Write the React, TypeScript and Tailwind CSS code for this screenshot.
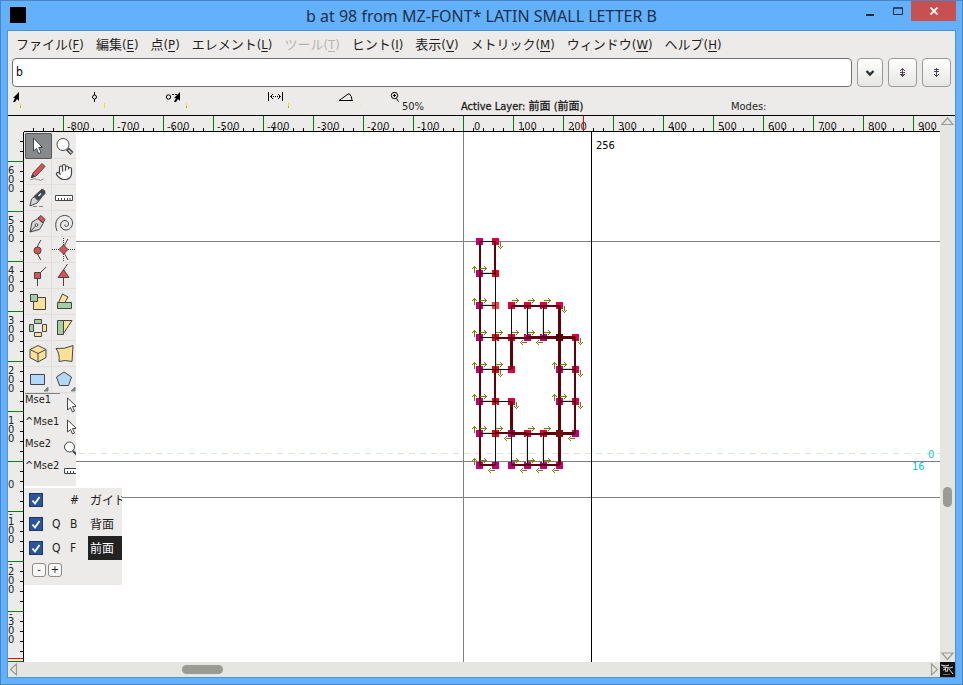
import React from "react";
import { Hand } from "lucide-react";

const UI = "font-['DejaVu_Sans_Condensed','DejaVu_Sans','Noto_Sans_CJK_JP',sans-serif]";
const INK = "#41464a";
const RED = "#e05050";
const GREEN = "#a4cda0";
const YELLOW = "#ffe09a";
const BLUE = "#b4d8f8";

const MENUS: [string, string, boolean?][] = [
  ["ファイル", "F"],
  ["編集", "E"],
  ["点", "P"],
  ["エレメント", "L"],
  ["ツール", "T", true],
  ["ヒント", "I"],
  ["表示", "V"],
  ["メトリック", "M"],
  ["ウィンドウ", "W"],
  ["ヘルプ", "H"],
];

function TitleBar() {
  return (
    <header className="grid h-[29px] shrink-0 grid-cols-[1fr_auto_1fr]">
      <div className="ml-[3px] mt-[6px] size-4 bg-black" />
      <h1 className="pt-[3px] font-['Noto_Sans',sans-serif] text-[16px] leading-[24px] text-[#1c3047]">
        b at 98 from MZ-FONT* LATIN SMALL LETTER B
      </h1>
      <div className="flex items-start justify-end">
        <button aria-label="Minimize" className="flex h-[22px] w-[27px] items-center justify-center">
          <svg width="9" height="9"><path d="M0 6h8v2H0z" fill="#1c2a38" /></svg>
        </button>
        <button aria-label="Maximize" className="flex h-5 w-[27px] items-center justify-center">
          <svg width="10" height="8"><path d="M.5 1h9v6.500h-9zM0 1h10" fill="none" stroke="#1c2a38" /></svg>
        </button>
        <button aria-label="Close" className="flex h-5 w-[45px] items-center justify-center bg-[#c75050]">
          <svg width="8" height="8"><path d="M.5 .5l7 7M7.500 .5l-7 7" stroke="#fff" strokeWidth="1.800" /></svg>
        </button>
      </div>
    </header>
  );
}

function MenuBar() {
  return (
    <nav className="flex h-[27px] shrink-0 items-center gap-3 pl-2">
      {MENUS.map(([name, key, off]) => (
        <button key={key} disabled={off} className={"flex items-baseline whitespace-nowrap leading-[20px] " + (off ? "text-[#b4b4b2]" : "text-[#1e1e1e]")}>
          <span className="font-['Noto_Sans_CJK_JP',sans-serif] text-[13px]">{name}</span>
          <span className="text-[13px]">(<u className="underline-offset-2">{key}</u>)</span>
        </button>
      ))}
    </nav>
  );
}

const RAISED = "flex h-[29px] items-center justify-center rounded-[4px] border border-[#9a9a98] bg-linear-to-b from-white to-[#e6e6e4]";

function WordRow() {
  return (
    <div className="flex shrink-0 items-center gap-[5px] px-1">
      <input aria-label="Characters" defaultValue="b" className="h-[29px] min-w-0 flex-1 rounded-[4px] border border-[#71716f] bg-white px-[3px] pb-px text-[12px] text-black" />
      <button aria-label="History" className={RAISED + " w-[26px]"}>
        <svg width="10" height="8"><path d="M1.500 2l3.500 3.500L8.500 2" fill="none" stroke="#2b3236" strokeWidth="2.400" /></svg>
      </button>
      <button aria-label="Previous" className={RAISED + " w-[29px]"}>
        <svg width="7" height="9" shapeRendering="crispEdges"><path d="M3 0h1v9h-1zM2 1h3v1h-3zM1 2h1v1h-1zM5 2h1v1h-1zM1 4h5v1h-5zM1 6h5v1h-5zM2 7h3v1h-3z" fill="#5b4660" /></svg>
      </button>
      <button aria-label="Next" className={RAISED + " w-[29px]"}>
        <svg width="7" height="9" shapeRendering="crispEdges"><path d="M3 0h1v9h-1zM1 1h5v1h-5zM1 3h5v1h-5zM1 6h1v1h-1zM5 6h1v1h-1zM2 7h3v1h-3z" fill="#46466a" /></svg>
      </button>
    </div>
  );
}

function InfoRow() {
  return (
    <div className="flex h-[29px] shrink-0 items-start border-b border-black pl-1 text-[11px] leading-[14px] text-[#1e1e1e]">
      <svg width="390" height="22" className="shrink-0" fill="none" stroke="#000">
        <path d="M7 5v9l-2-2-2 3H1l2-4H1z" fill="#000" stroke="none" />
        <path d="M82.500 5v3M82.500 12v3" /><circle cx="82.500" cy="10" r="2" />
        <circle cx="156.500" cy="10" r="2.200" /><path d="M160 7.500h5" strokeDasharray="2 1" />
        <path d="M168 5v9l-2-2-2 3h-2l2-4h-2z" fill="#000" stroke="none" />
        <path d="M256.500 5v9M270.500 5v9" /><path d="M259 9.500h10" strokeDasharray="1 1" /><path d="M261 7l-2.500 2.500L261 12M266 7l2.500 2.500L266 12" />
        <path d="M327 13.500h14M327 13.500l10-7M337 6.500q3 2.500 3 6.500" />
        <circle cx="382.500" cy="8.500" r="3.200" /><path d="M381 8.500h3M382.500 7v3M384.500 11.500l2 3" />
        <path d="M8.500 16v5M92.500 16v5M174.500 16v5M276.500 16v5" stroke="#f0e800" />
        <path d="M8.500 19v2M174.500 19v2M276.500 19v2" stroke="#d8a000" />
        <path d="M348.500 16v5" stroke="#f2eea0" />
      </svg>
      <span className="w-[59px] shrink-0 pt-[13px]">50%</span>
      <span className="w-[270px] shrink-0 pt-[13px]">
        <span className="[-webkit-text-stroke:0.3px]">Active Layer: 前面 (前面)</span>
      </span>
      <span className="pt-[13px]">Modes:</span>
    </div>
  );
}

function range(from: number, to: number, step: number) {
  const out: number[] = [];
  for (let v = from; v <= to; v += step) out.push(v);
  return out;
}

const ORIGIN_X = 439;
const ORIGIN_Y = 329;

function TopRuler() {
  return (
    <svg className="col-start-2 h-4 w-full text-[11px]" fill="#222">
      {range(-430, 1500, 10).map((v) => (v % 50 === 0 ? null : <path key={v} d={`M${ORIGIN_X + v + 0.5} 12v3`} stroke="#000" />))}
      {range(-400, 1500, 50).map((v) => <path key={v} d={`M${ORIGIN_X + v + 0.5} 0v15`} stroke="#008000" />)}
      {range(-400, 450, 50).map((v) => (
        <text key={v} x={ORIGIN_X + v + (v < 0 ? 4 : v === 0 ? 11 : 5)} y="14">{v * 2}</text>
      ))}
      <path d="M559.500 0v15" stroke="#f00" />
      <path d="M0 15.500h3000" stroke="#000" />
    </svg>
  );
}

function SideRuler() {
  return (
    <svg className="h-full w-4 text-[11px]" fill="#222">
      {range(-320, 900, 10).map((v) => (v % 50 === 0 ? null : <path key={v} d={`M12 ${ORIGIN_Y + v + 0.5}h3`} stroke="#000" />))}
      {range(-300, 900, 50).map((v) => <path key={v} d={`M0 ${ORIGIN_Y + v + 0.5}h15`} stroke="#008000" />)}
      {range(-300, 150, 50).map((v) => {
        const y = ORIGIN_Y + v;
        const digits = String(Math.abs(v * 2)).split("");
        return (
          <g key={v}>
            {v > 0 && <text x="1" y={y + 6}>-</text>}
            {digits.map((d, i) => (
              <text key={i} x="0" y={v === 0 ? y + 27 : y + 13 + i * 9 + (v > 0 ? 1 : 0)}>{d}</text>
            ))}
          </g>
        );
      })}
      <path d="M0 526.500h15" stroke="#f00" />
      <path d="M15.500 0v3000" stroke="#000" />
    </svg>
  );
}

const M = "#c00080";
const R = "#e00040";
const P = "#f00010";
const POINTS: [number, number, string][] = [
  [479, 241, M], [495, 241, R], [479, 273, M], [495, 273, P], [479, 305, M], [495, 305, "#ff4040"],
  [511, 305, R], [527, 305, R], [543, 305, R], [559, 305, R],
  [479, 337, M], [495, 337, P], [511, 337, R], [527, 337, M], [543, 337, M], [575, 337, R],
  [479, 369, M], [495, 369, P], [511, 369, R], [559, 369, M], [575, 369, R],
  [479, 401, M], [495, 401, P], [511, 401, R], [559, 401, M], [575, 401, R],
  [479, 433, M], [495, 433, P], [511, 433, M], [527, 433, R], [543, 433, R], [575, 433, M],
  [479, 465, M], [495, 465, M], [511, 465, M], [527, 465, M], [543, 465, M], [559, 465, M],
];
const RIGHT = [
  [479, 273], [479, 305], [511, 305], [527, 305], [543, 305], [479, 337], [495, 337], [511, 337], [527, 337], [543, 337],
  [479, 369], [495, 369], [559, 369], [479, 401], [559, 401], [479, 433], [495, 433], [527, 433], [543, 433],
  [479, 465], [511, 465], [527, 465], [543, 465],
];
const LEFT = [[527, 337], [543, 337], [511, 433], [575, 433], [495, 465], [527, 465], [543, 465], [559, 465]];
const UP = [[479, 273], [479, 305], [479, 337], [479, 369], [479, 401], [479, 433], [479, 465], [559, 369], [559, 401]];
const DOWN = [[495, 241], [559, 305], [575, 337], [495, 369], [575, 369], [511, 401], [575, 401]];

function Outline() {
  return (
    <svg className="absolute inset-0 size-full text-[11px]">
      <g transform="translate(-24 -132)" fill="none">
        <path d="M24 453.500h2000" stroke="#d5e8d5" strokeDasharray="6 5" />
        <path d="M24 241.500h2000M24 461.500h2000M24 497.500h2000M463.500 132v2000" stroke="#808080" />
        <path d="M591.500 132v2000" stroke="#000" />
        {POINTS.map(([x, y, c]) => <path key={x + "," + y} d={`M${x - 3} ${y - 3}h7v7h-7z`} fill={c} />)}
        <g stroke="#d8d8d8">
          <path d="M526.500 308v27M542.500 308v27M526.500 436v27M542.500 436v27M483 272.500h9M483 304.500h9M483 368.500h9M483 400.500h9M483 432.500h9M563 368.500h9M563 400.500h9M496.500 340v26M496.500 404v26" />
        </g>
        <path d="M479 241.500h16M479 273.500h16M479 305.500h16M479 337.500h16M479 369.500h32M479 401.500h32M479 433.500h16M559 369.500h16M559 401.500h16M495.500 273v192M511.500 305v32M527.500 305v32M543.500 305v32M511.500 433v32M527.500 433v32M543.500 433v32" stroke="#111" />
        <path d="M480 241v225M495 241v32M495 369v32M575 337v97M511 306h49M495 338h32M479 465h16M511 465h49M495 433h32M527 434h17" stroke="#600008" strokeWidth="2" />
        <path d="M511.500 337v32M559.500 305v160M511.500 401v32M527 337.500h48M543 433.500h32M511 433.500h16" stroke="#600008" strokeWidth="3" />
        <path d="M556 334h7v7h-7z" fill="#500" /><path d="M556 430h7v7h-7z" fill="#701010" />
        <g fill="#7a7a00" shapeRendering="crispEdges">
          {RIGHT.map(([x, y]) => <path key={x + "r" + y} d={`M${x + 1} ${y - 5}h7v1h-7zM${x + 5} ${y - 7}h1v1h1v3h-1v1h-1v-1h1v-3h-1z`} />)}
          {LEFT.map(([x, y]) => <path key={x + "l" + y} d={`M${x - 7} ${y + 5}h7v1h-7zM${x - 4} ${y + 3}h-1v1h-1v3h1v1h1v-1h-1v-3h1z`} />)}
          {UP.map(([x, y]) => <path key={x + "u" + y} d={`M${x - 5} ${y - 7}h1v7h-1zM${x - 7} ${y - 4}v-1h1v-1h3v1h1v1h-1v-1h-3v1z`} />)}
          {DOWN.map(([x, y]) => <path key={x + "d" + y} d={`M${x + 5} ${y + 1}h1v7h-1zM${x + 3} ${y + 5}v1h1v1h3v-1h1v-1h-1v1h-3v-1z`} />)}
        </g>
      </g>
      <text x="572" y="17" fill="#000">256</text>
      <svg x="100%" overflow="visible" fill="#00c8c8">
        <text x="-12" y="326">0</text>
        <text x="-28" y="338">16</text>
      </svg>
    </svg>
  );
}

const corner = <path d="M23 20v4h-4z" fill="#7d8285" stroke="#7d8285" />;

const TOOLS: [string, React.ReactNode][] = [
  ["Pointer", <path d="M8.500 5v13l3-2.500 2.200 5 2.300-1-2.200-5h3.700z" fill="#fff" />],
  ["Magnify", <><circle cx="11" cy="11.500" r="6" fill="#fff" /><path d="M15.500 16l4.500 4.500" strokeWidth="4" /><path d="M16.500 17l3 3" stroke="#ccc" strokeWidth="1.500" /></>],
  ["Freehand", <><path d="M17 4.500l3 3-9 9.500-4.500 1.500 1.500-4.500z" fill={RED} /><path d="M6.500 18.500l1-3 2 2z" fill={INK} /><path d="M5.500 21q4-2.500 7-.5t6-.5" stroke="#8c9092" /></>],
  ["Hand", <Hand x={3} y={4} width={18} height={18} color={INK} fill="#fff" strokeWidth={1.6} />],
  ["Knife", <><path d="M5 21l1.500-7 6-5 4 3.500-4.500 5.500z" fill="#d6d8d8" /><path d="M9 11.500l7.500-7q4 0 3.500 4l-7 7z" fill={INK} /><path d="M13.500 11l2.500-2.500" stroke="#eee" strokeWidth="1.500" /><path d="M8 21.500h12" stroke="#808486" strokeDasharray="4 2" /></>],
  ["Ruler", <path d="M3.500 10.500h17v5h-17zM6.500 15v-2M9.500 15v-2M12.500 15v-2M15.500 15v-2M18 15v-2" fill="#fff" />],
  ["Pen", <><path d="M5 21l2-10 6-3.500 5 5-3.500 6z" fill="#d6d8d8" /><path d="M13 7l3-2.500 4 4L18 12z" fill={RED} /><path d="M5 21l6-6.500" /><circle cx="11.500" cy="14" r="1.300" fill="#fff" /></>],
  ["Spiral", <path d="M5 20C1 10 7 4.500 12.500 4.500c5.500 0 8 4 8 7.500 0 4.500-3.500 7-6.500 7s-5.500-2-5.500-5 2.500-4.500 4.500-4.500 3.500 1.500 3.500 3.500-1.500 2.500-2.500 2.500-1.500-1-1-2" />],
  ["Curve point", <><path d="M16 3q-8 10 0 20" /><circle cx="12.500" cy="13.500" r="3.500" fill={RED} /></>],
  ["HV curve point", <><path d="M0 12.500h24M11.500 1v24" strokeDasharray="1 1" /><path d="M16 2q-8 10 0 21" /><path d="M11.500 8l4.500 4.500-4.500 4.500L7 12.500z" fill={RED} /></>],
  ["Corner point", <><path d="M12.500 11v12M15 10l6-6" /><path d="M9.500 9.500h6v6h-6z" fill={RED} /></>],
  ["Tangent point", <><path d="M11.500 13v10M11.500 7l4-6" /><path d="M11.500 6.500l5.500 8H6z" fill={RED} /></>],
  ["Scale", <><path d="M8.500 8.500h12v12h-12z" fill={YELLOW} /><path d="M5.500 5.500h7v7h-7z" fill={GREEN} /></>],
  ["Rotate", <><path d="M10.500 5l5.500 3-5 9-5-2.500z" fill={YELLOW} /><path d="M5.500 13.500h14v6h-14z" fill={GREEN} /></>],
  ["Flip", <><path d="M9.500 4.500h7v4h-7zM4.500 9.500h4v7h-4z" fill={GREEN} /><path d="M9.500 17.500h7v4h-7zM17.500 9.500h4v7h-4z" fill={YELLOW} /></>],
  ["Skew", <><path d="M10 5.500h10l-8.500 13z" fill={YELLOW} /><path d="M5.500 5.500h6v14h-6z" fill={GREEN} /></>],
  ["Rotate 3D", <><path d="M13 4.500l8 4v8l-8 4.500-8-4.500v-8z" fill={YELLOW} /><path d="M5 8.500l8 4 8-4M13 12.500V21" /></>],
  ["Perspective", <path d="M4 7.500q8 1 17-3l-1 16q-7-2-13 0 1-8-3-13z" fill={YELLOW} />],
  ["Rectangle", <><path d="M5.500 7.500h14v10h-14z" fill={BLUE} />{corner}</>],
  ["Polygon", <><path d="M12 5l7.500 5-3 8.500h-9L4.500 10z" fill={BLUE} />{corner}</>],
];

const BINDINGS: [string, React.ReactNode][] = [
  ["Mse1", <path d="M3.500 4v12l3-2.500 2 4.500 2-1-2-4.500h4z" fill="#fff" />],
  ["^Mse1", <path d="M3.500 4v12l3-2.500 2 4.500 2-1-2-4.500h4z" fill="#fff" />],
  ["Mse2", <><circle cx="5.500" cy="9" r="5" fill="#fff" /><path d="M9 13l4 4" strokeWidth="2" /></>],
  ["^Mse2", <path d="M.5 8.500h14v5H.5zM3.500 13v-2M6.500 13v-2M9.500 13v-2" fill="#fff" />],
];

function ToolPalette() {
  return (
    <div className="absolute left-0 top-0 h-[354px] w-[52px] overflow-hidden bg-[#edebe9] pl-px pt-px">
      <div className="grid w-[53px] grid-cols-[27px_26px]">
        {TOOLS.map(([name, icon], i) => (
          <button key={name} aria-label={name} className={"h-[26px] text-left " + (i === 0 ? "rounded-[2px] bg-[#868a8c] shadow-[inset_0_0_0_1px_#54585a]" : "shadow-[inset_-1px_-1px_#e0dfdd]")}>
            <svg viewBox="0 0 26 26" width="26" height="26" fill="none" stroke={INK}>{icon}</svg>
          </button>
        ))}
      </div>
      <div className="w-[35px] border-t border-[#808080]" />
      {BINDINGS.map(([name, icon]) => (
        <div key={name} className="flex h-[22px] justify-between text-[11px] leading-[12px] text-[#1e1e1e]">
          <span>{name}</span>
          <svg width="12" height="22" className="shrink-0" fill="none" stroke={INK}>{icon}</svg>
        </div>
      ))}
    </div>
  );
}

const LAYERS = [
  { id: "guide", quad: "", mark: "#", name: "ガイド", active: false },
  { id: "back", quad: "Q", mark: "B", name: "背面", active: false },
  { id: "fore", quad: "Q", mark: "F", name: "前面", active: true },
];

function LayerPalette() {
  return (
    <div className="absolute left-0 top-[356px] h-[97px] w-[98px] overflow-hidden bg-[#edebe9] text-[12px] text-[#1e1e1e]">
      {LAYERS.map((l) => (
        <div key={l.id} className="grid h-6 grid-cols-[28px_18px_18px_34px] items-center">
          <span className="grid pl-[5px]">
            <input id={l.id} type="checkbox" defaultChecked className="peer col-start-1 row-start-1 size-[14px] appearance-none border border-[#1c3a66] bg-[#2a5599]" />
            <svg width="14" height="14" className="pointer-events-none col-start-1 row-start-1 opacity-0 peer-checked:opacity-100"><path d="M3.500 7.500l2.500 3 4.500-6.500" fill="none" stroke="#fff" strokeWidth="1.800" /></svg>
          </span>
          <span>{l.quad}</span>
          <span>{l.mark}</span>
          <label htmlFor={l.id} className={"h-6 overflow-hidden whitespace-nowrap pl-[2px] pt-[2px] leading-[22px] " + (l.active ? "bg-[#222] text-white" : "")}>{l.name}</label>
        </div>
      ))}
      <div className="flex gap-[2px] pl-2 pt-[3px]">
        {["-", "+"].map((s) => (
          <button key={s} className="flex size-[14px] items-center justify-center rounded-[3px] border border-[#8c8c8a] bg-[#f8f8f8] text-[11px] leading-[12px]">{s}</button>
        ))}
      </div>
    </div>
  );
}

function Arrow({ d, label }: { d: string; label: string }) {
  return (
    <button aria-label={label} className="size-[15px] shrink-0">
      <svg width="15" height="15"><path d={d} fill="none" stroke="#9c9d97" strokeWidth="1.200" /></svg>
    </button>
  );
}

export default function App() {
  return (
    <div className={"flex h-screen flex-col border border-[#4a86c4] bg-[#63b1fc] px-[6px] pb-[6px] " + UI}>
      <TitleBar />
      <main className="flex min-h-0 flex-1 flex-col border border-[#5092d2] bg-[#edebe9]">
        <MenuBar />
        <WordRow />
        <InfoRow />
        <div className="grid min-h-0 flex-1 grid-cols-[16px_1fr_15px] grid-rows-[16px_1fr_15px]">
          <TopRuler />
          <div className="col-start-3 row-span-2 row-start-1 flex flex-col bg-[#e5e5e1]">
            <Arrow label="Scroll up" d="M2 8.500L7.500 2l5.500 6.500z" />
            <div className="flex flex-1 flex-col items-center">
              <div className="grow-[356]" />
              <div className="h-5 w-[9px] rounded-full bg-[#9a9b95]" />
              <div className="grow-[140]" />
            </div>
            <Arrow label="Scroll down" d="M2 6l5.500 6.500L13 6z" />
          </div>
          <SideRuler />
          <section className="relative min-h-0 overflow-hidden bg-white">
            <Outline />
            <ToolPalette />
            <LayerPalette />
          </section>
          <div className="col-span-2 flex bg-[#e5e5e1]">
            <Arrow label="Scroll left" d="M8.500 2L2.500 7.500l6 5.500z" />
            <div className="flex flex-1 items-center">
              <div className="grow-[159]" />
              <div className="h-[9px] w-[41px] rounded-full bg-[#9a9b95]" />
              <div className="grow-[702]" />
            </div>
            <Arrow label="Scroll right" d="M6.500 2l6 5.500-6 5.500z" />
          </div>
          <svg width="15" height="15" className="bg-[#111]" fill="none" stroke="#ddd">
            <path d="M1 3l5 1 3-1M3 5l7 1 3-1M5 5l1 5M8 6l-1 4M9 7l4 5M3 8l3-1" />
            <path d="M3 12.500h7" stroke="#7a6a5a" />
          </svg>
        </div>
      </main>
    </div>
  );
}
